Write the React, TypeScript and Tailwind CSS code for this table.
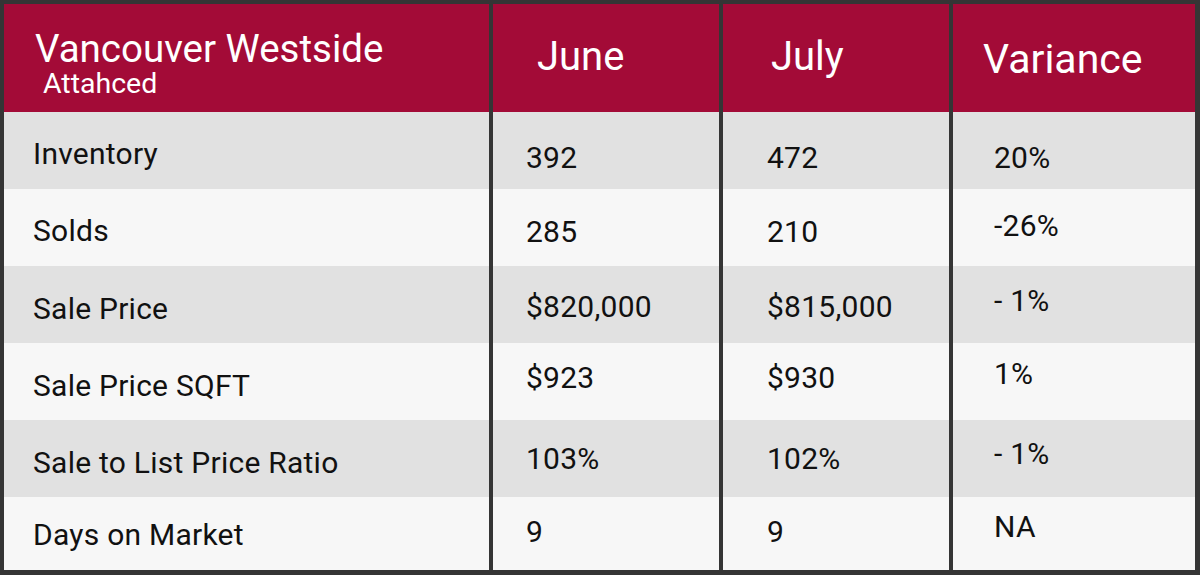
type Row = {
  label: string;
  june: string;
  july: string;
  variance: string;
  bg: string;
  h: string;
  labelPt: string;
  valPt: string;
  varPt: string;
};

const rows: Row[] = [
  { label: 'Inventory', june: '392', july: '472', variance: '20%', bg: 'bg-[#e1e1e1]', h: 'h-[77px]', labelPt: 'pt-[25px]', valPt: 'pt-[29px]', varPt: 'pt-[29px]' },
  { label: 'Solds', june: '285', july: '210', variance: '-26%', bg: 'bg-[#f7f7f7]', h: 'h-[77px]', labelPt: 'pt-[25px]', valPt: 'pt-[26px]', varPt: 'pt-[20px]' },
  { label: 'Sale Price', june: '$820,000', july: '$815,000', variance: '- 1%', bg: 'bg-[#e1e1e1]', h: 'h-[77px]', labelPt: 'pt-[26px]', valPt: 'pt-[24px]', varPt: 'pt-[18px]' },
  { label: 'Sale Price SQFT', june: '$923', july: '$930', variance: '1%', bg: 'bg-[#f7f7f7]', h: 'h-[77px]', labelPt: 'pt-[26px]', valPt: 'pt-[18px]', varPt: 'pt-[14px]' },
  { label: 'Sale to List Price Ratio', june: '103%', july: '102%', variance: '- 1%', bg: 'bg-[#e1e1e1]', h: 'h-[77px]', labelPt: 'pt-[26px]', valPt: 'pt-[22px]', varPt: 'pt-[17px]' },
  { label: 'Days on Market', june: '9', july: '9', variance: 'NA', bg: 'bg-[#f7f7f7]', h: 'h-[73px]', labelPt: 'pt-[21px]', valPt: 'pt-[18px]', varPt: 'pt-[13px]' },
];

export default function App() {
  return (
    <div className="w-[1200px] h-[575px] bg-[#353535] pt-[4px] pl-[4px] pr-[5px] pb-[5px] font-['Roboto',sans-serif]">
      <div className="grid grid-cols-[485px_226px_226px_242px] gap-x-[4px]">
        {/* header */}
        <div className="h-[108px] bg-[#a30b37] text-white pl-[31px] pt-[25px] flex flex-col">
          <span className="text-[38.5px] leading-[40px]">Vancouver Westside</span>
          <span className="text-[28.5px] leading-[28px] pl-[8px] mt-[1px]">Attahced</span>
        </div>
        <div className="h-[108px] bg-[#a30b37] text-white pl-[44px] pt-[31px] text-[40px] leading-[44px]">June</div>
        <div className="h-[108px] bg-[#a30b37] text-white pl-[48px] pt-[31px] text-[40px] leading-[44px]">July</div>
        <div className="h-[108px] bg-[#a30b37] text-white pl-[30px] pt-[33px] text-[41px] leading-[44px]">Variance</div>

        {rows.map((r) => (
          <div key={r.label} className="contents text-[30px] leading-[34px] tracking-[0.25px] text-[#111]">
            <div className={`${r.bg} ${r.h} ${r.labelPt} pl-[29px]`}>{r.label}</div>
            <div className={`${r.bg} ${r.h} ${r.valPt} pl-[33px]`}>{r.june}</div>
            <div className={`${r.bg} ${r.h} ${r.valPt} pl-[44px]`}>{r.july}</div>
            <div className={`${r.bg} ${r.h} ${r.varPt} pl-[41px]`}>{r.variance}</div>
          </div>
        ))}
      </div>
    </div>
  );
}
